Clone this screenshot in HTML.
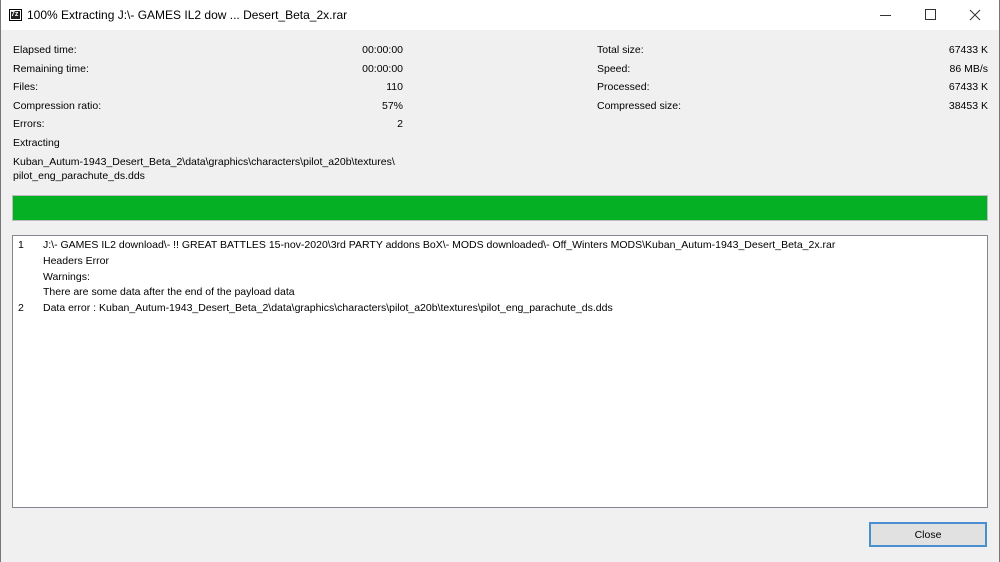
<!DOCTYPE html>
<html><head><style>
body{margin:0;width:1000px;height:562px;background:#f0f0f0;font-family:"Liberation Sans",sans-serif;font-size:10.5px;color:#000;position:relative;overflow:hidden}
.t{position:absolute;white-space:nowrap;line-height:13px}
.r{text-align:right}
#title{position:absolute;left:0;top:0;width:1000px;height:30px;background:#fff}
</style></head><body>
<div id="title">
<div style="position:absolute;left:9px;top:9px;width:11px;height:10px;border:1px solid #000;background:#fff"><div style="position:absolute;left:1px;top:1px;width:9px;height:8px;background:#222;color:#fff;font-size:7px;line-height:8px;font-weight:bold">7z</div></div>
<div class="t" style="left:27px;top:9px;font-size:12px">100% Extracting J:\- GAMES IL2 dow ... Desert_Beta_2x.rar</div>
<div style="position:absolute;left:880px;top:15px;width:11px;height:1px;background:#333"></div>
<div style="position:absolute;left:925px;top:9px;width:9px;height:9px;border:1px solid #333"></div>
<svg style="position:absolute;left:969px;top:9px" width="12" height="12"><path d="M1 1L11 11M11 1L1 11" stroke="#333" stroke-width="1"/></svg>
</div>
<div style="position:absolute;left:0;top:0;width:1px;height:562px;background:#777"></div>
<div style="position:absolute;right:0;top:0;width:1px;height:562px;background:#777"></div>

<div class="t" style="left:13px;top:44px">Elapsed time:</div><div class="t r" style="left:300px;width:103px;top:44px">00:00:00</div>
<div class="t" style="left:13px;top:63px">Remaining time:</div><div class="t r" style="left:300px;width:103px;top:63px">00:00:00</div>
<div class="t" style="left:13px;top:81px">Files:</div><div class="t r" style="left:300px;width:103px;top:81px">110</div>
<div class="t" style="left:13px;top:100px">Compression ratio:</div><div class="t r" style="left:300px;width:103px;top:100px">57%</div>
<div class="t" style="left:13px;top:118px">Errors:</div><div class="t r" style="left:300px;width:103px;top:118px">2</div>
<div class="t" style="left:13px;top:137px">Extracting</div>
<div class="t" style="left:13px;top:156px">Kuban_Autum-1943_Desert_Beta_2\data\graphics\characters\pilot_a20b\textures\</div>
<div class="t" style="left:13px;top:170px">pilot_eng_parachute_ds.dds</div>

<div class="t" style="left:597px;top:44px">Total size:</div><div class="t r" style="left:880px;width:108px;top:44px">67433 K</div>
<div class="t" style="left:597px;top:63px">Speed:</div><div class="t r" style="left:880px;width:108px;top:63px">86 MB/s</div>
<div class="t" style="left:597px;top:81px">Processed:</div><div class="t r" style="left:880px;width:108px;top:81px">67433 K</div>
<div class="t" style="left:597px;top:100px">Compressed size:</div><div class="t r" style="left:880px;width:108px;top:100px">38453 K</div>

<div style="position:absolute;left:12px;top:195px;width:976px;height:26px;background:#06b025;border:1px solid #bcbcbc;box-sizing:border-box"></div>

<div style="position:absolute;left:12px;top:235px;width:976px;height:273px;background:#fff;border:1px solid #828790;box-sizing:border-box"></div>
<div class="t" style="left:18px;top:239px">1</div><div class="t" style="left:43px;top:239px">J:\- GAMES IL2 download\- !! GREAT BATTLES 15-nov-2020\3rd PARTY addons BoX\- MODS downloaded\- Off_Winters MODS\Kuban_Autum-1943_Desert_Beta_2x.rar</div>
<div class="t" style="left:43px;top:255px">Headers Error</div>
<div class="t" style="left:43px;top:271px">Warnings:</div>
<div class="t" style="left:43px;top:286px">There are some data after the end of the payload data</div>
<div class="t" style="left:18px;top:302px">2</div><div class="t" style="left:43px;top:302px">Data error : Kuban_Autum-1943_Desert_Beta_2\data\graphics\characters\pilot_a20b\textures\pilot_eng_parachute_ds.dds</div>

<div style="position:absolute;left:869px;top:522px;width:118px;height:25px;background:#e1e1e1;border:2px solid #4a90d0;box-sizing:border-box;text-align:center;line-height:22px">Close</div>
</body></html>
